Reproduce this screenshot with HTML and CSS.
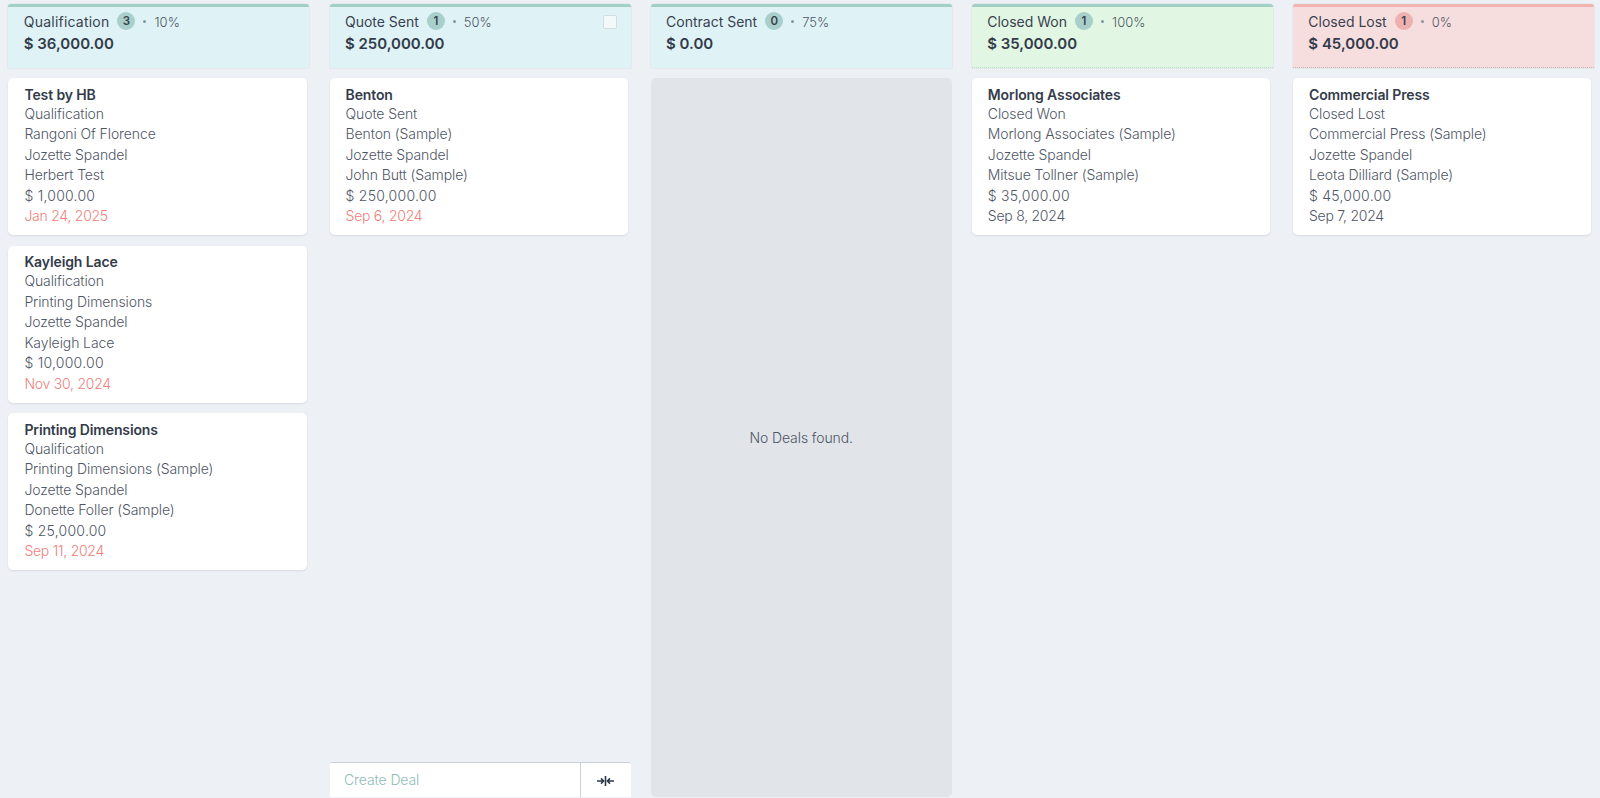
FILE: index.html
```html
<!DOCTYPE html>
<html lang="en">
<head>
<meta charset="utf-8">
<title>Deals</title>
<link rel="stylesheet" href="styles.css">
</head>
<body>
<main class="board">
  <section class="col">
    <header class="head teal">
      <div class="head-top"><span class="stage stage-wide">Qualification</span><span class="count">3</span><span class="dot"></span><span class="pct">10%</span></div>
      <div class="sum">$ 36,000.00</div>
    </header>
    <div class="list">
      <article class="card"><h3>Test by HB</h3><p>Qualification</p><p>Rangoni Of Florence</p><p>Jozette Spandel</p><p>Herbert Test</p><p class="amt">$ 1,000.00</p><p class="date late">Jan 24, 2025</p></article>
      <article class="card"><h3>Kayleigh Lace</h3><p>Qualification</p><p>Printing Dimensions</p><p>Jozette Spandel</p><p>Kayleigh Lace</p><p class="amt">$ 10,000.00</p><p class="date late">Nov 30, 2024</p></article>
      <article class="card"><h3>Printing Dimensions</h3><p>Qualification</p><p>Printing Dimensions (Sample)</p><p>Jozette Spandel</p><p>Donette Foller (Sample)</p><p class="amt">$ 25,000.00</p><p class="date late">Sep 11, 2024</p></article>
    </div>
  </section>
  <section class="col">
    <header class="head teal has-check">
      <div class="head-top"><span class="stage">Quote Sent</span><span class="count">1</span><span class="dot"></span><span class="pct">50%</span></div>
      <div class="sum">$ 250,000.00</div>
      <span class="check"></span>
    </header>
    <div class="list">
      <article class="card"><h3>Benton</h3><p>Quote Sent</p><p>Benton (Sample)</p><p>Jozette Spandel</p><p>John Butt (Sample)</p><p class="amt">$ 250,000.00</p><p class="date late">Sep 6, 2024</p></article>
    </div>
    <div class="create">
      <span class="create-label">Create Deal</span>
      <span class="create-btn">
        <svg width="19" height="12" viewBox="0 0 19 12" fill="none" stroke="#2f3a4d" stroke-width="1.6"><path d="M9.5 1v10"/><path d="M1 6h6M5 3.4 7.6 6 5 8.6"/><path d="M18 6h-6M14 3.4 11.4 6l2.6 2.6"/></svg>
      </span>
    </div>
  </section>
  <section class="col">
    <header class="head teal">
      <div class="head-top"><span class="stage">Contract Sent</span><span class="count">0</span><span class="dot"></span><span class="pct">75%</span></div>
      <div class="sum">$ 0.00</div>
    </header>
    <div class="empty">No Deals found.</div>
  </section>
  <section class="col">
    <header class="head green">
      <div class="head-top"><span class="stage">Closed Won</span><span class="count">1</span><span class="dot"></span><span class="pct">100%</span></div>
      <div class="sum">$ 35,000.00</div>
    </header>
    <div class="list">
      <article class="card"><h3>Morlong Associates</h3><p>Closed Won</p><p>Morlong Associates (Sample)</p><p>Jozette Spandel</p><p>Mitsue Tollner (Sample)</p><p class="amt">$ 35,000.00</p><p class="date">Sep 8, 2024</p></article>
    </div>
  </section>
  <section class="col">
    <header class="head red">
      <div class="head-top"><span class="stage">Closed Lost</span><span class="count">1</span><span class="dot"></span><span class="pct">0%</span></div>
      <div class="sum">$ 45,000.00</div>
    </header>
    <div class="list">
      <article class="card"><h3>Commercial Press</h3><p>Closed Lost</p><p>Commercial Press (Sample)</p><p>Jozette Spandel</p><p>Leota Dilliard (Sample)</p><p class="amt">$ 45,000.00</p><p class="date">Sep 7, 2024</p></article>
    </div>
  </section>
</main>
</body>
</html>
```
FILE: styles.css
```css
* { box-sizing: border-box; }
html, body { margin: 0; height: 100%; }
body {
  background: #edf0f5;
  color: #5c6372;
  font-family: Inter, Lato, sans-serif;
  overflow: hidden;
}
.board {
  display: flex;
  gap: 20.15px;
  height: 797px;
  padding: 4px 0 0 8.4px;
}
.col {
  flex: 0 0 301px;
  display: flex;
  flex-direction: column;
  min-width: 0;
}
.head {
  position: relative;
  height: 64px;
  padding: 4px 16px 0 15.4px;
  border-top: 3px solid #a3cfc7;
  border-radius: 3px 3px 0 0;
  box-shadow: 0 0 0 0.5px rgba(150, 190, 190, .25);
}
.teal { background: #dff3f6; }
.green { background: #e1f6e3; border-bottom: 1px dotted #bcdcc4; }
.red { background: #f7dede; border-top-color: #f2b3b1; border-bottom: 1px dotted #c9b4b8; }
.head-top {
  display: flex;
  align-items: center;
  height: 20px;
  font-size: 14px;
  color: #39414f;
}
.stage-wide { letter-spacing: .22px; }
.count {
  width: 18px;
  height: 18px;
  margin-left: 8px;
  border-radius: 50%;
  background: #a8cfc9;
  font-size: 11.5px;
  line-height: 18px;
  font-weight: 600;
  text-align: center;
  color: #39414f;
}
.red .count { background: #efb1af; }
.dot {
  width: 3px;
  height: 3px;
  margin: 1px 8px 0 8px;
  border-radius: 50%;
  background: #8b93a0;
}
.pct { margin-top: 1px; font-size: 13px; font-weight: 300; color: #4f5666; }
.sum {
  margin-top: 1.5px;
  font-size: 15px;
  line-height: 22px;
  font-weight: 600;
  color: #333b4a;
}
.check {
  position: absolute;
  top: 8px;
  right: 14px;
  width: 14px;
  height: 14px;
  background: #f3f9fa;
  border: 1px solid #d6dde2;
  border-radius: 2px;
}
.list {
  display: flex;
  flex-direction: column;
  gap: 10.5px;
  margin-top: 10px;
}
.card {
  width: 298.5px;
  height: 157px;
  padding: 6.5px 16px 0 16px;
  background: #fff;
  border-radius: 5px;
  box-shadow: 0 1px 2px rgba(60, 70, 90, .12);
}
.card h3 {
  margin: 0;
  font-size: 14px;
  line-height: 19px;
  font-weight: 600;
  letter-spacing: -.12px;
  color: #333b4a;
}
.card p {
  margin: 0;
  font-size: 14px;
  line-height: 20.6px;
  font-weight: 300;
  letter-spacing: -.1px;
  color: #4f5666;
}
.card p.amt { letter-spacing: .25px; }
.card p.date { letter-spacing: -.25px; }
.card p.late { color: #f0807b; }
.empty {
  flex: 1;
  margin-top: 10px;
  display: flex;
  align-items: center;
  justify-content: center;
  background: #e1e4e9;
  border-radius: 5px;
  font-size: 14px;
  font-weight: 300;
  letter-spacing: -.1px;
  color: #4f5666;
}
.create {
  margin-top: auto;
  height: 35px;
  display: flex;
  background: #fff;
  border-top: 1px solid #c9d0da;
  border-radius: 2px 2px 0 0;
}
.create-label {
  flex: 1;
  padding: 8px 0 0 14.5px;
  font-size: 14px;
  font-weight: 300;
  letter-spacing: -.1px;
  color: #8fbcb7;
}
.create-btn {
  flex: 0 0 51px;
  display: flex;
  align-items: center;
  justify-content: center;
  padding-top: 2px;
  border-left: 1px solid #c9d0da;
}
```
